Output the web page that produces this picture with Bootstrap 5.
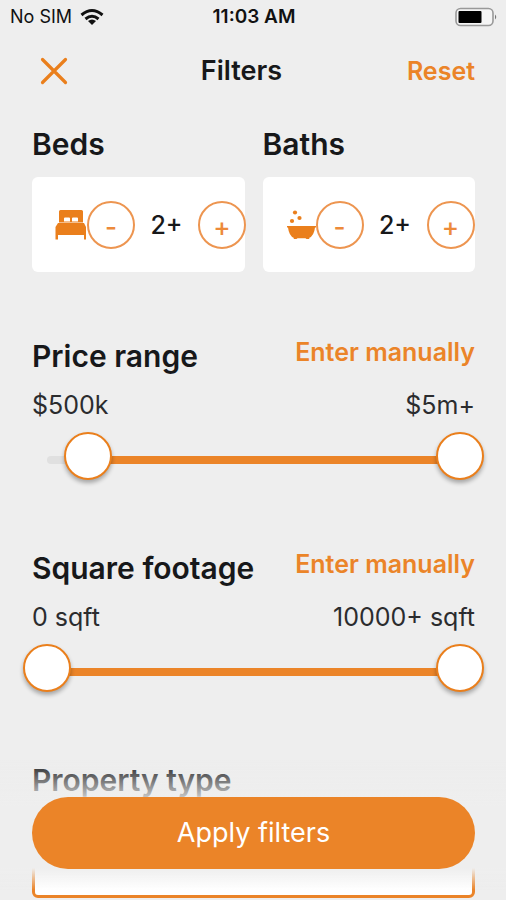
<!DOCTYPE html>
<html lang="en">
<head>
<meta charset="utf-8">
<meta name="viewport" content="width=device-width, initial-scale=1">
<title>Filters</title>
<link href="https://cdn.jsdelivr.net/npm/bootstrap@5.3.0/dist/css/bootstrap.min.css" rel="stylesheet">
<style>
:root { --accent: #eb8428; --page: #eeeeee; --ink: #17181a; }
body { font-family: Inter, "Liberation Sans", sans-serif; background: var(--page); color: var(--ink); }
.status-bar { height: 34px; padding: 0 8px 0 10px; font-size: 18px; line-height: 34px; color: #111; }
.status-bar > * { flex: 1 1 0; }
.clock { font-size: 19px; font-weight: 600; }
.top-bar { height: 74px; padding: 0 31px 0 32px; }
.bar-title { font-size: 27px; line-height: 32px; font-weight: 600; margin: 0; }
.text-action { font-size: 25px; line-height: 28px; font-weight: 600; color: var(--accent); background: none; border: 0; padding: 0; white-space: nowrap; }
.icon-action { background: none; border: 0; padding: 0 8px; color: #ea7f1c; line-height: 0; }
.filters { padding: 18px 31px 2px 32px; }
.section-title { font-size: 30px; line-height: 36px; font-weight: 600; margin: 0; }
.filter-section { margin-bottom: 70px; }
.counts { --bs-gutter-x: 18px; margin-bottom: 66px; }
.counter { height: 95px; margin-top: 15px; padding-left: 23px; background: #fff; border-radius: 6px; }
.counter svg { flex: none; color: #ea7f1c; }
.count-btn { flex: none; width: 48px; height: 48px; padding: 4px 0 0; border: 2px solid #ed9550; border-radius: 50%; background: #fff; color: #ed8a3a; font-size: 26px; font-weight: 500; line-height: 36px; }
.count-value { flex: 0 0 63px; text-align: center; font-size: 25px; line-height: 32px; font-weight: 500; }
.limits { margin-top: 15px; margin-bottom: 11px; font-size: 25px; line-height: 32px; color: #2b2c2e; }
.dual-range { display: grid; margin: 0 -9px; }
.dual-range > * { grid-area: 1 / 1; }
.rail { align-self: center; margin: 8px 24px 0; height: 8px; border-radius: 4px; background: #e0e0e0; }
.rail-fill { height: 8px; background: var(--accent); margin-left: auto; }
.dual-range input { appearance: none; -webkit-appearance: none; width: 100%; height: 48px; margin: 0; background: none; pointer-events: none; }
.dual-range input::-webkit-slider-runnable-track { height: 48px; background: none; }
.dual-range input::-webkit-slider-thumb { -webkit-appearance: none; width: 48px; height: 48px; border: 2px solid #ea7f1c; border-radius: 50%; background: #fff; box-shadow: 0 3px 4px rgba(0,0,0,.3); pointer-events: auto; }
.type-box { height: 90px; margin-top: 10px; border: 3px solid var(--accent); border-radius: 6px; background: #fff; }
.apply-bar { padding: 37px 31px 31px 32px; pointer-events: none; background: linear-gradient(rgba(238,238,238,0) 0, #eee 46px, #eee 108px, rgba(238,238,238,0) 130px); }
.apply-btn { height: 72px; border: 0; border-radius: 36px; background: var(--accent); color: #fff; font-size: 27px; pointer-events: auto; }
</style>
</head>
<body>
<div class="status-bar d-flex">
  <div class="d-flex align-items-center gap-2">
    <span>No SIM</span>
    <svg width="24" height="18" viewBox="0 0 24 18" fill="none" stroke="#111" stroke-width="3" aria-hidden="true"><path d="M1.500 7Q12-2 22.500 7M5.500 11Q12 5.500 18.500 11"/><path d="M8 13Q12 10 16 13L12 17Z" fill="#111" stroke="none"/></svg>
  </div>
  <div class="clock text-center">11:03 AM</div>
  <div class="d-flex align-items-center justify-content-end">
    <svg width="43" height="20" viewBox="0 0 43 20" aria-hidden="true"><rect x="1" y="1.500" width="37" height="17" rx="4.500" fill="#f5f5f5" stroke="#999" stroke-width="1.600"/><rect x="3.500" y="4" width="23" height="12" rx="1" fill="#000"/><path d="M40 7.500Q42.500 10 40 12.500Z" fill="#777"/></svg>
  </div>
</div>
<header class="top-bar d-flex align-items-center justify-content-between">
  <button class="icon-action" type="button" aria-label="Close"><svg width="28" height="28" viewBox="0 0 28 28" fill="none" stroke="currentColor" stroke-width="3.200" stroke-linecap="round"><path d="M2.500 2.500l23 23M25.500 2.500l-23 23"/></svg></button>
  <h1 class="bar-title">Filters</h1>
  <button class="text-action" type="button">Reset</button>
</header>
<main class="filters">
  <div class="row counts">
    <section class="col-6">
      <h2 class="section-title">Beds</h2>
      <div class="counter d-flex align-items-center">
        <svg width="32" height="30" viewBox="0 0 32 30" fill="currentColor" aria-hidden="true"><path fill-rule="evenodd" d="M4 1.500Q4 0 5.500 0h21Q28 0 28 1.500V12.500H4zM10 7.500Q9 7.500 9 8.500V11.500h6V8.500q0-1-1-1zM18 7.500q-1 0-1 1V11.500h6V8.500q0-1-1-1z"/><path d="M3 13h26l2 4v12.500H29V25H3v4.500H.500V17z"/></svg>
        <button class="count-btn" type="button" aria-label="Fewer beds">-</button>
        <span class="count-value">2+</span>
        <button class="count-btn" type="button" aria-label="More beds">+</button>
      </div>
    </section>
    <section class="col-6">
      <h2 class="section-title">Baths</h2>
      <div class="counter d-flex align-items-center">
        <svg width="30" height="30" viewBox="0 0 30 30" fill="currentColor" aria-hidden="true"><circle cx="9" cy="2.500" r="2.100"/><circle cx="13.500" cy="8" r="2.100"/><circle cx="6" cy="11" r="2.100"/><path d="M1 16h29v1.500h-1q-1 8.500-6 10.500l.5 1h-3l-1-.7h-8l-1 .7h-3l.5-1Q3 26 2 17.500H1z"/></svg>
        <button class="count-btn" type="button" aria-label="Fewer baths">-</button>
        <span class="count-value">2+</span>
        <button class="count-btn" type="button" aria-label="More baths">+</button>
      </div>
    </section>
  </div>
  <section class="filter-section">
    <div class="d-flex justify-content-between align-items-start">
      <h2 class="section-title">Price range</h2>
      <button class="text-action" type="button">Enter manually</button>
    </div>
    <div class="limits d-flex justify-content-between"><span>$500k</span><span>$5m+</span></div>
    <div class="dual-range">
      <div class="rail"><div class="rail-fill" style="width: 90%"></div></div>
      <input type="range" min="0" max="5000" value="500" aria-label="Minimum price">
      <input type="range" min="0" max="5000" value="5000" aria-label="Maximum price">
    </div>
  </section>
  <section class="filter-section">
    <div class="d-flex justify-content-between align-items-start">
      <h2 class="section-title">Square footage</h2>
      <button class="text-action" type="button">Enter manually</button>
    </div>
    <div class="limits d-flex justify-content-between"><span>0 sqft</span><span>10000+ sqft</span></div>
    <div class="dual-range">
      <div class="rail"><div class="rail-fill" style="width: 100%"></div></div>
      <input type="range" min="0" max="10000" value="0" aria-label="Minimum square footage">
      <input type="range" min="0" max="10000" value="10000" aria-label="Maximum square footage">
    </div>
  </section>
  <section>
    <h2 class="section-title">Property type</h2>
    <div class="type-box"></div>
  </section>
</main>
<footer class="apply-bar fixed-bottom">
  <button class="apply-btn w-100" type="button">Apply filters</button>
</footer>
<script src="https://cdn.jsdelivr.net/npm/bootstrap@5.3.0/dist/js/bootstrap.bundle.min.js"></script>
</body>
</html>
